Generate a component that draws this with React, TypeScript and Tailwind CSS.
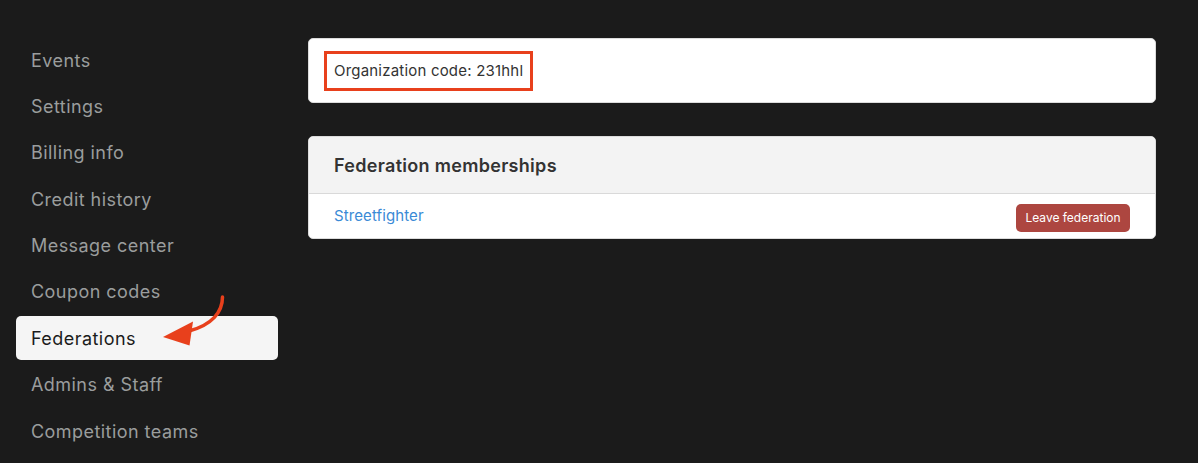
import React from 'react';

const navItems = [
    'Events',
    'Settings',
    'Billing info',
    'Credit history',
    'Message center',
    'Coupon codes',
    'Federations',
    'Admins & Staff',
    'Competition teams',
];

const Sidebar: React.FC<{ active: string }> = ({ active }) => (
    <nav className="w-[262px] shrink-0 flex flex-col gap-[2.4px]">
        {navItems.map((item) => (
            <div
                key={item}
                className={`h-11 flex items-center px-[15px] rounded-[5px] text-[18px] tracking-[0.45px] ${
                    item === active ? 'bg-[#f5f5f5] text-[#1b1b1b]' : 'text-[#9a9d9d]'
                }`}
            >
                {item}
            </div>
        ))}
    </nav>
);

// red annotation arrow pointing at the active item
const Arrow: React.FC = () => (
    <svg className="absolute left-0 top-0 pointer-events-none" width="300" height="380" viewBox="0 0 300 380">
        <path d="M222.5 297 C 222.5 312, 212 325, 189 331" fill="none" stroke="#e8401c" strokeWidth="3.5" strokeLinecap="round" />
        <polygon points="163,337 193,321.5 189.5,345.5" fill="#e8401c" />
    </svg>
);

export default function App() {
    return (
        <div
            className="relative min-h-[463px] bg-[#1b1b1b] flex pl-4 pr-[42px] pt-[38px] gap-[30px]"
            style={{ fontFamily: 'Inter, "Noto Sans", sans-serif' }}
        >
            <Sidebar active="Federations" />

            <main className="flex-1 flex flex-col gap-[33px]">
                <div className="h-[65px] bg-white rounded-[5px] border border-[#dcdcdc] pl-[15px] pt-[12px]">
                    <div className="inline-flex items-center h-[40px] w-[209px] border-[3px] border-[#e8401c] pl-[7px] text-[15px] tracking-[0.2px] text-[#333]">
                        Organization code: 231hhl
                    </div>
                </div>

                <div className="bg-white rounded-[5px] border border-[#dcdcdc] overflow-hidden">
                    <div className="h-[57px] bg-[#f3f3f3] border-b border-[#d9d9d9] flex items-center px-[25px]">
                        <h2 className="text-[18px] font-semibold tracking-[0.3px] text-[#333]">Federation memberships</h2>
                    </div>
                    <div className="h-[44px] flex items-center justify-between px-[25px]">
                        <a className="text-[15px] tracking-[0.1px] text-[#3a8ad6]">Streetfighter</a>
                        <button className="mt-1 h-[28px] w-[114px] rounded-[5px] bg-[#ad4640] text-white text-[12px]">
                            Leave federation
                        </button>
                    </div>
                </div>
            </main>

            <Arrow />
        </div>
    );
}
